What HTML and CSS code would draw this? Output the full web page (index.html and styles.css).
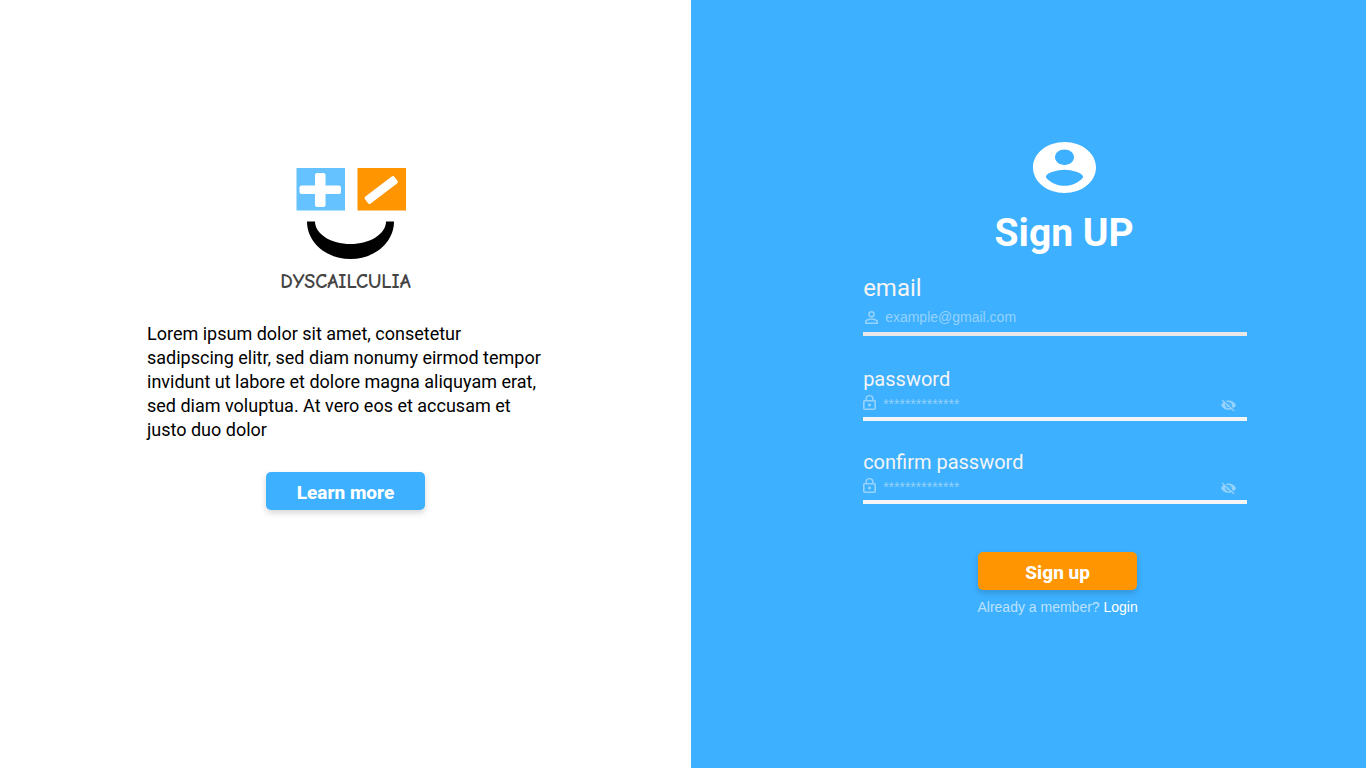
FILE: index.html
```html
<!DOCTYPE html>
<html lang="en">
<head>
<meta charset="utf-8">
<meta name="viewport" content="width=device-width, initial-scale=1">
<title>Dyscailculia – Sign up</title>
<link rel="stylesheet" href="styles.css">
</head>
<body>
<main class="page">
  <section class="intro">
    <svg class="logo" viewBox="0 0 110 92" aria-hidden="true">
      <rect x="0.5" width="48.500" height="42.500" fill="#66c2ff"/>
      <rect x="61.500" width="48.500" height="42.500" fill="#ff9500"/>
      <rect x="19" y="5" width="10.500" height="34" rx="2" fill="#fff"/>
      <rect x="3.500" y="17.500" width="41.500" height="8.500" rx="2" fill="#fff"/>
      <rect x="66.500" y="17.300" width="37" height="8.800" rx="2" fill="#fff" transform="rotate(-37 85.500 21.500)"/>
      <path d="M11 53.500C11 74.500 30.500 91 54.500 91S98 74.500 98 53.500H90C90 66 74 76 54.500 76S19 66 19 53.500Z" fill="#000"/>
    </svg>
    <div class="brand">DYSCAILCULIA</div>
    <p class="lead">Lorem ipsum dolor sit amet, consetetur sadipscing elitr, sed diam nonumy eirmod tempor invidunt ut labore et dolore magna aliquyam erat, sed diam voluptua. At vero eos et accusam et justo duo dolor</p>
    <button class="button button-blue" type="button">Learn more</button>
  </section>

  <section class="signup">
    <form class="form">
      <header class="heading">
        <svg class="avatar" viewBox="0 0 63 51" aria-hidden="true">
          <path fill="#fff" fill-rule="evenodd" d="M31.500 0C48.900 0 63 11.400 63 25.500S48.900 51 31.500 51 0 39.600 0 25.500 14.100 0 31.500 0ZM31.500 7.600C26.300 7.600 22 11 22 15.300S26.300 23 31.500 23 41 19.600 41 15.300 36.700 7.600 31.500 7.600ZM12.800 35.200C17 40.500 23.800 43.800 31.500 43.800S46 40.500 50.200 35.200C50.200 30.500 38 27.700 31.500 27.700S12.800 30.500 12.800 35.200Z"/>
        </svg>
        <h1 class="title">Sign UP</h1>
      </header>

      <div class="field field-email">
        <label class="label" for="email">email</label>
        <div class="control">
          <svg class="icon icon-person" viewBox="4 4 16 16" preserveAspectRatio="none" aria-hidden="true"><path fill="currentColor" d="M12 5.900a2.100 2.100 0 1 1 0 4.200 2.100 2.100 0 0 1 0-4.200m0 9c2.970 0 6.100 1.460 6.100 2.100v1.100H5.900V17c0-.64 3.130-2.100 6.100-2.100M12 4a4 4 0 1 0 0 8 4 4 0 0 0 0-8Zm0 9c-2.670 0-8 1.340-8 4v3h16v-3c0-2.660-5.330-4-8-4Z"/></svg>
          <input class="input" id="email" type="email" placeholder="example@gmail.com">
        </div>
      </div>

      <div class="field">
        <label class="label" for="password">password</label>
        <div class="control">
          <svg class="icon icon-lock" viewBox="4 1 16 21" preserveAspectRatio="none" aria-hidden="true"><path fill="currentColor" d="M12 17a2 2 0 1 0 0-4 2 2 0 0 0 0 4Zm6-9h-1V6A5 5 0 0 0 7 6v2H6a2 2 0 0 0-2 2v10c0 1.100.9 2 2 2h12a2 2 0 0 0 2-2V10a2 2 0 0 0-2-2ZM8.900 6a3.100 3.100 0 0 1 6.200 0v2H8.900V6ZM18 20H6V10h12v10Z"/></svg>
          <input class="input" id="password" type="password" placeholder="**************">
          <button class="reveal" type="button" aria-label="Show password">
            <svg class="icon icon-eye" viewBox="1 2 22 21" preserveAspectRatio="none" aria-hidden="true"><path fill="currentColor" d="M12 7a5 5 0 0 1 4.640 6.830l2.920 2.920A11.800 11.800 0 0 0 23 12C21.270 7.610 17 4.500 12 4.500c-1.400 0-2.740.25-3.980.7l2.160 2.160C10.740 7.130 11.350 7 12 7ZM2 4.270l2.740 2.740A11.800 11.800 0 0 0 1 12c1.730 4.390 6 7.500 11 7.500 1.550 0 3.030-.3 4.380-.84L19.730 22 21 20.730 3.270 3 2 4.270ZM7.530 9.800l1.550 1.550A3 3 0 0 0 12.650 14.920l1.550 1.550A5 5 0 0 1 7.530 9.800Zm4.310-.78 3.150 3.150.02-.16a3 3 0 0 0-3-3l-.17.01Z"/></svg>
          </button>
        </div>
      </div>

      <div class="field">
        <label class="label" for="confirm">confirm password</label>
        <div class="control">
          <svg class="icon icon-lock" viewBox="4 1 16 21" preserveAspectRatio="none" aria-hidden="true"><path fill="currentColor" d="M12 17a2 2 0 1 0 0-4 2 2 0 0 0 0 4Zm6-9h-1V6A5 5 0 0 0 7 6v2H6a2 2 0 0 0-2 2v10c0 1.100.9 2 2 2h12a2 2 0 0 0 2-2V10a2 2 0 0 0-2-2ZM8.900 6a3.100 3.100 0 0 1 6.200 0v2H8.900V6ZM18 20H6V10h12v10Z"/></svg>
          <input class="input" id="confirm" type="password" placeholder="**************">
          <button class="reveal" type="button" aria-label="Show confirmed password">
            <svg class="icon icon-eye" viewBox="1 2 22 21" preserveAspectRatio="none" aria-hidden="true"><path fill="currentColor" d="M12 7a5 5 0 0 1 4.640 6.830l2.920 2.920A11.800 11.800 0 0 0 23 12C21.270 7.610 17 4.500 12 4.500c-1.400 0-2.740.25-3.980.7l2.160 2.160C10.740 7.130 11.350 7 12 7ZM2 4.270l2.740 2.740A11.800 11.800 0 0 0 1 12c1.730 4.390 6 7.500 11 7.500 1.550 0 3.030-.3 4.380-.84L19.730 22 21 20.730 3.270 3 2 4.270ZM7.530 9.800l1.550 1.550A3 3 0 0 0 12.650 14.920l1.550 1.550A5 5 0 0 1 7.530 9.800Zm4.310-.78 3.150 3.150.02-.16a3 3 0 0 0-3-3l-.17.01Z"/></svg>
          </button>
        </div>
      </div>

      <footer class="actions">
        <button class="button button-orange" type="submit">Sign up</button>
        <p class="member">Already a member? <a class="login" href="#login">Login</a></p>
      </footer>
    </form>
  </section>
</main>
</body>
</html>
```
FILE: styles.css
```css
* {
  box-sizing: border-box;
}

body {
  margin: 0;
  font-family: Roboto, "Liberation Sans", sans-serif;
  color: #000;
  background: #fff;
}

.page {
  display: grid;
  grid-template-columns: 691fr 675fr;
  min-height: 100vh;
}

.intro {
  display: flex;
  flex-direction: column;
  align-items: center;
  padding: 168px 24px 24px;
}

.logo {
  width: 110px;
  height: 92px;
  margin-left: 10px;
}

.brand {
  margin-top: 10px;
  font-family: "Comic Sans MS", "Comic Neue", Roboto, sans-serif;
  font-size: 20px;
  font-weight: 700;
  line-height: 24px;
  color: #444;
}

.lead {
  width: 100%;
  max-width: 397px;
  margin: 28px 0 30px;
  font-size: 18px;
  line-height: 24px;
}

.button {
  width: 159px;
  height: 38px;
  padding: 2px 0 0;
  border: 0;
  border-radius: 5px;
  box-shadow: 0 3px 6px rgba(0, 0, 0, 0.16);
  font-family: inherit;
  font-size: 19px;
  font-weight: 800;
  color: #fff;
  cursor: pointer;
}

.button-blue {
  background: #3db0ff;
}

.button-orange {
  background: #ff9500;
}

.signup {
  padding: 142px 24px 24px 25.5%;
  background: #3db0ff;
}

.form {
  max-width: 384px;
}

.heading {
  display: flex;
  flex-direction: column;
  align-items: center;
  padding-left: 18px;
}

.avatar {
  width: 63px;
  height: 51px;
}

.title {
  margin: 16px 0 17px;
  font-size: 39px;
  font-weight: 700;
  line-height: 48px;
  color: #fff;
}

.field {
  display: flex;
  flex-direction: column;
  margin-bottom: 29px;
}

.field-email {
  margin-bottom: 31px;
}

.label {
  font-size: 20px;
  line-height: 24px;
  color: #f5f5f5;
}

.control {
  display: flex;
  align-items: center;
  height: 30px;
  gap: 7px;
  border-bottom: 4px solid #f5f5f5;
  color: #95d2fc;
}

.field-email .label {
  font-size: 24px;
  line-height: 28px;
}

.field-email .control {
  height: 34px;
  padding-left: 2px;
  border-color: #e8e8e8;
}

.icon {
  display: block;
  flex: none;
}

.icon-person {
  width: 13px;
  height: 13px;
}

.icon-lock {
  width: 13px;
  height: 15px;
  margin-bottom: 4px;
}

.icon-eye {
  width: 15px;
  height: 13px;
}

.input {
  flex: 1;
  min-width: 0;
  padding: 0;
  border: 0;
  outline: 0;
  background: transparent;
  font-family: "Liberation Sans", Arial, sans-serif;
  font-size: 14px;
  line-height: 20px;
  color: #fff;
}

.input::placeholder {
  color: #95d2fc;
  opacity: 1;
}

.reveal {
  margin-right: 11px;
  padding: 2px 0 0;
  border: 0;
  background: transparent;
  color: #95d2fc;
  cursor: pointer;
}

.actions {
  display: flex;
  flex-direction: column;
  align-items: center;
  padding: 19px 0 0 5px;
}

.member {
  margin: 7px 0 0;
  font-family: "Liberation Sans", Arial, sans-serif;
  font-size: 14px;
  line-height: 20px;
  color: #bce2fd;
}

.login {
  color: #fff;
  text-decoration: none;
}
```
